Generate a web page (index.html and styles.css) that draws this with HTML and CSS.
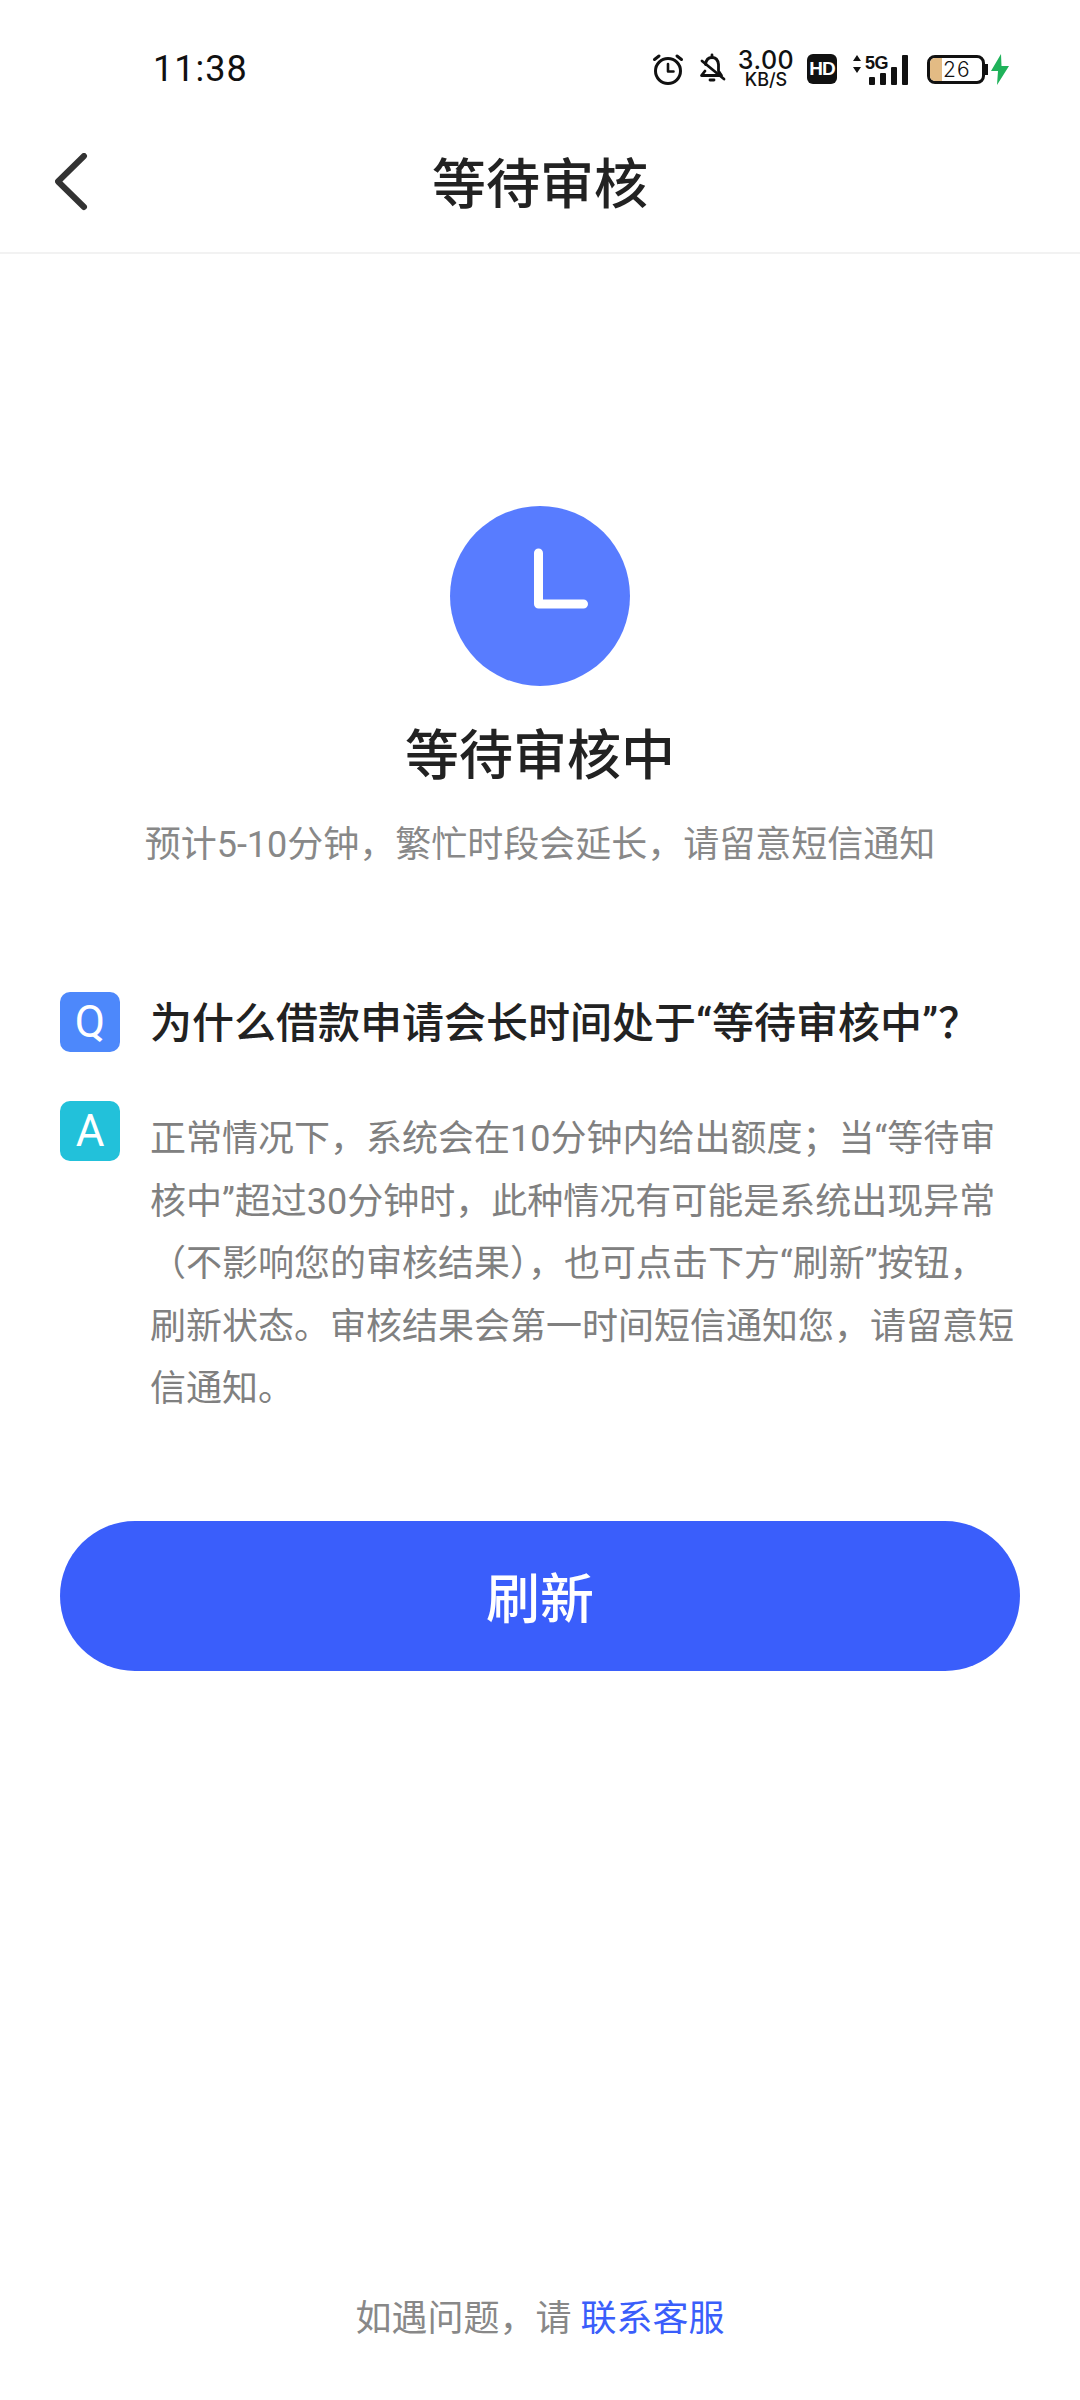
FILE: index.html
```html
<!DOCTYPE html>
<html lang="zh-CN">
  <head>
    <meta charset="UTF-8" />
    <meta name="viewport" content="width=device-width, initial-scale=1.0" />
    <title>等待审核</title>
    <link rel="stylesheet" href="styles.css">
  </head>
  <body>
    <div class="page">
      <!-- Status bar -->
      <div class="status-bar">
        <span class="time">11:38</span>
        <div class="status-icons">
          <svg class="icon-alarm" width="32" height="32" viewBox="0 0 32 32" fill="none" stroke="#111" stroke-width="3" stroke-linecap="round" stroke-linejoin="round">
            <circle cx="16" cy="18" r="12.5" />
            <path d="M16 11v7.5h5.5" stroke-width="2.6" />
            <path d="M2.5 6.5 7 3M29.5 6.5 25 3" />
          </svg>
          <svg class="icon-bell" width="28" height="32" viewBox="0 0 28 32" fill="none" stroke="#111" stroke-width="2.8" stroke-linecap="round" stroke-linejoin="round">
            <path d="M7.5 11.5C8 7 10.5 4.5 14 4.5s6 2.500 6.500 7v6.500l3 4.500H3.500L7 18" />
            <path d="M14 2v2.500M12 27h4" />
            <path d="M4 8l22 18" />
          </svg>
          <div class="speed">
            <span class="speed-num">3.00</span>
            <span class="speed-unit">KB/S</span>
          </div>
          <span class="hd">HD</span>
          <div class="signal">
            <svg class="arrows" width="10" height="20" viewBox="0 0 10 20" fill="#111"><path d="M5 1 9 7H1zM5 19 1 13h8z" /></svg>
            <span class="five-g">5G</span>
            <div class="bars">
              <i class="bar bar-1"></i>
              <i class="bar bar-2"></i>
              <i class="bar bar-3"></i>
              <i class="bar bar-4"></i>
            </div>
          </div>
          <div class="battery">
            <div class="battery-body">
              <div class="battery-fill"></div>
              <span class="battery-num">26</span>
            </div>
            <div class="battery-cap"></div>
          </div>
          <svg class="icon-bolt" width="20" height="31" viewBox="0 0 20 31" fill="#1fb25a"><path d="M11 0 1 17h7l-1 14L19 12h-7.500z" /></svg>
        </div>
      </div>

      <!-- Nav bar -->
      <div class="nav-bar">
        <svg class="back" width="34" height="58" viewBox="0 0 34 58" fill="none" stroke="#333" stroke-width="6" stroke-linecap="round" stroke-linejoin="round">
          <path d="M29 3 3 28.500 29 54" />
        </svg>
        <h1 class="nav-title">等待审核</h1>
      </div>

      <div class="content">
        <div class="state">
          <svg class="clock" width="180" height="180" viewBox="0 0 180 180">
            <circle cx="90" cy="90" r="90" fill="#587cff" />
            <path d="M88.500 47v51h45" fill="none" stroke="#fff" stroke-width="9" stroke-linecap="round" stroke-linejoin="round" />
          </svg>
          <h2 class="state-title">等待审核中</h2>
          <p class="state-desc">预计5-10分钟，繁忙时段会延长，请留意短信通知</p>
        </div>

        <div class="qa">
          <div class="qa-row question">
            <span class="badge badge-q">Q</span>
            <p class="question-text">为什么借款申请会长时间处于“等待审核中”？</p>
          </div>
          <div class="qa-row answer">
            <span class="badge badge-a">A</span>
            <p class="answer-text">正常情况下，系统会在10分钟内给出额度；当“等待审核中”超过30分钟时，此种情况有可能是系统出现异常（不影响您的审核结果），也可点击下方“刷新”按钮，刷新状态。审核结果会第一时间短信通知您，请留意短信通知。</p>
          </div>
        </div>

        <button class="refresh-btn">刷新</button>
      </div>

      <div class="footer">如遇问题，请 <a class="service-link">联系客服</a></div>
    </div>
  </body>
</html>
```

FILE: styles.css
```css
* {
  margin: 0;
  padding: 0;
  box-sizing: border-box;
}

body {
  font-family: Roboto, "Noto Sans CJK SC", sans-serif;
  background: #fff;
}

.page {
  width: 1080px;
  height: 2400px;
  display: flex;
  flex-direction: column;
  background: #fff;
}

/* Status bar */
.status-bar {
  height: 100px;
  padding: 38px 70px 0 153px;
  display: flex;
  justify-content: space-between;
  align-items: center;
  color: #111;
}

.time {
  font-family: Roboto, sans-serif;
  font-size: 36px;
  letter-spacing: 1px;
}

.status-icons {
  display: flex;
  align-items: center;
}

.icon-alarm {
  margin-right: 14px;
}

.icon-bell {
  margin-right: 15px;
}

.speed {
  width: 50px;
  margin-right: 16px;
  display: flex;
  flex-direction: column;
  align-items: center;
  font-family: Inter, sans-serif;
  font-weight: 500;
}

.speed-num {
  font-size: 25px;
  line-height: 21px;
  letter-spacing: 0.5px;
}

.speed-unit {
  font-size: 18px;
  line-height: 17px;
}

.hd {
  width: 30px;
  height: 30px;
  margin-right: 15px;
  background: #111;
  color: #fff;
  border-radius: 6px;
  font-family: "Liberation Sans", sans-serif;
  font-size: 19px;
  font-weight: 700;
  line-height: 30px;
  text-align: center;
  letter-spacing: -1px;
}

.signal {
  position: relative;
  width: 56px;
  height: 32px;
  margin-right: 19px;
}

.arrows {
  position: absolute;
  left: 0;
  top: 1px;
}

.five-g {
  position: absolute;
  left: 13px;
  top: 0;
  font-family: "Liberation Sans", sans-serif;
  font-size: 18px;
  font-weight: 700;
  line-height: 20px;
  letter-spacing: -0.5px;
}

.bars {
  position: absolute;
  right: 0;
  bottom: 0;
  display: flex;
  align-items: flex-end;
  gap: 5px;
}

.bar {
  width: 6px;
  background: #111;
  border-radius: 1px;
}

.bar-1 {
  height: 8px;
}

.bar-2 {
  height: 12px;
}

.bar-3 {
  height: 18px;
}

.bar-4 {
  height: 30px;
}

.battery {
  display: flex;
  align-items: center;
  margin-right: 2px;
}

.battery-body {
  position: relative;
  width: 58px;
  height: 29px;
  border: 3px solid #111;
  border-radius: 8px;
  overflow: hidden;
}

.battery-fill {
  width: 12px;
  height: 100%;
  background: #e3bb84;
}

.battery-num {
  position: absolute;
  left: 13px;
  top: 0;
  font-family: Inter, sans-serif;
  font-size: 21px;
  font-weight: 300;
  line-height: 23px;
  letter-spacing: 1px;
  color: #111;
}

.battery-cap {
  width: 3px;
  height: 11px;
  background: #111;
}

/* Nav bar */
.nav-bar {
  position: relative;
  height: 154px;
  padding-top: 20px;
  border-bottom: 2px solid #f2f2f2;
  display: flex;
  align-items: center;
  justify-content: center;
}

.back {
  position: absolute;
  left: 55px;
  top: 53px;
}

.nav-title {
  font-size: 54px;
  font-weight: 500;
  color: #222;
  line-height: 60px;
}

/* Main area */
.content {
  padding: 252px 60px 0;
}

.state {
  display: flex;
  flex-direction: column;
  align-items: center;
}

.state-title {
  margin-top: 32px;
  font-size: 54px;
  font-weight: 500;
  line-height: 78px;
  color: #222;
}

.state-desc {
  margin-top: 24px;
  font-size: 36px;
  line-height: 50px;
  color: #888;
}

.qa {
  margin-top: 122px;
}

.qa-row {
  display: flex;
  gap: 30px;
}

.badge {
  flex: none;
  width: 60px;
  height: 60px;
  border-radius: 10px;
  color: #fff;
  font-family: Roboto, sans-serif;
  font-size: 44px;
  line-height: 60px;
  text-align: center;
}

.badge-q {
  background: #4d88fb;
}

.badge-a {
  background: #22c1da;
}

.question-text {
  font-size: 42px;
  font-weight: 500;
  line-height: 64px;
  color: #222;
  white-space: nowrap;
}

.answer {
  margin-top: 45px;
}

.answer-text {
  width: 870px;
  font-size: 36px;
  line-height: 62.600px;
  color: #808080;
  margin-top: 7px;
}

.refresh-btn {
  display: block;
  width: 960px;
  height: 150px;
  margin-top: 100px;
  border: none;
  border-radius: 75px;
  background: #3a5efb;
  color: #fff;
  font-family: inherit;
  font-size: 54px;
  font-weight: 500;
}

/* Footer */
.footer {
  margin-top: auto;
  padding-bottom: 56px;
  text-align: center;
  font-size: 36px;
  line-height: 50px;
  color: #888;
}

.service-link {
  color: #3a5efb;
}
```
